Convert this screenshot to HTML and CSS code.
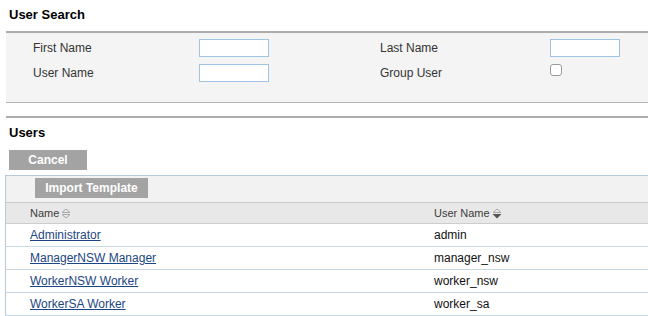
FILE: index.html
```html
<!DOCTYPE html>
<html lang="en">
<head>
  <meta charset="UTF-8">
  <title>User Search</title>
  <link rel="stylesheet" href="styles.css">
</head>
<body>
  <h2 class="page-title">User Search</h2>
  <div class="search-panel">
    <div class="search-grid">
      <label>First Name</label>
      <input type="text" class="field">
      <label>Last Name</label>
      <input type="text" class="field">
      <label>User Name</label>
      <input type="text" class="field">
      <label>Group User</label>
      <input type="checkbox" class="check">
    </div>
  </div>

  <div class="users-head">
    <h2 class="page-title users-title">Users</h2>
    <button class="btn btn-cancel">Cancel</button>
  </div>

  <div class="grid-box">
    <div class="toolbar">
      <button class="btn btn-import">Import Template</button>
    </div>
    <table class="user-table">
      <thead>
        <tr>
          <th class="col-name">Name<svg class="sort" width="10" height="11" viewBox="0 0 10 11"><polygon points="1,4.5 5,1 9,4.5" fill="none" stroke="#a8a8a8"/><polygon points="1,6.5 9,6.5 5,10" fill="none" stroke="#a8a8a8"/></svg></th>
          <th>User Name<svg class="sort" width="10" height="11" viewBox="0 0 10 11"><polygon points="1,4.5 5,1 9,4.5" fill="none" stroke="#a8a8a8"/><polygon points="0.5,6 9.5,6 5,10.5" fill="#555"/></svg></th>
        </tr>
      </thead>
      <tbody>
        <tr><td><a href="#">Administrator</a></td><td>admin</td></tr>
        <tr><td><a href="#">ManagerNSW Manager</a></td><td>manager_nsw</td></tr>
        <tr><td><a href="#">WorkerNSW Worker</a></td><td>worker_nsw</td></tr>
        <tr><td><a href="#">WorkerSA Worker</a></td><td>worker_sa</td></tr>
      </tbody>
    </table>
  </div>
</body>
</html>
```

FILE: styles.css
```css
body {
  margin: 0;
  font-family: "Liberation Sans", Arial, sans-serif;
  font-size: 12px;
  color: #333;
  background: #fff;
}

.page-title {
  margin: 0;
  padding: 7px 9px 9px;
  font-size: 13px;
  line-height: 15px;
  font-weight: bold;
  color: #000;
}

/* search form */
.search-panel {
  margin-left: 6px;
  border-top: 2px solid #acacac;
  border-bottom: 1px solid #b4b4b4;
  background-color: #f4f4f4;
  padding: 6px 0 20px 27px;
}

.search-grid {
  display: grid;
  grid-template-columns: 166px 181px 170px auto;
  grid-auto-rows: 18px;
  row-gap: 7px;
  align-items: center;
}

.search-grid label {
  color: #333;
}

.field {
  box-sizing: border-box;
  width: 70px;
  height: 18px;
  margin: 0;
  border: 1px solid #9dc4e6;
  background: #fff;
}

.check {
  appearance: none;
  -webkit-appearance: none;
  align-self: start;
  box-sizing: border-box;
  width: 12px;
  height: 12px;
  margin: 0;
  border: 1px solid #9a9a9a;
  border-radius: 3px;
  background: #fff;
}

/* users section */
.users-head {
  margin-top: 13px;
  margin-left: 6px;
  border-top: 2px solid #acacac;
}

.users-title {
  padding: 7px 3px 10px;
}

.btn {
  height: 20px;
  padding: 0;
  border: none;
  background-color: #a3a3a3;
  color: #fff;
  font-family: "Liberation Sans", Arial, sans-serif;
  font-size: 12px;
  font-weight: bold;
  cursor: pointer;
}

.btn-cancel {
  display: block;
  width: 78px;
  margin-left: 3px;
}

.btn-import {
  width: 113px;
}

.grid-box {
  margin-top: 5px;
  margin-left: 5px;
  border-top: 1px solid #b7c8d7;
  border-left: 1px solid #b7c8d7;
}

.toolbar {
  height: 24px;
  padding: 2px 0 0 29px;
  background-color: #f2f2f2;
  border-bottom: 1px solid #cacaca;
}

.user-table {
  width: 100%;
  border-collapse: collapse;
}

.user-table th {
  height: 20px;
  padding: 0 0 0 24px;
  text-align: left;
  font-size: 11px;
  font-weight: normal;
  color: #3c3c3c;
  background-color: #e8e8e8;
  border-bottom: 1px solid #cdcdcd;
}

.user-table .col-name {
  width: 380px;
}

.sort {
  margin-left: 2px;
  vertical-align: -2px;
}

.user-table td {
  height: 22px;
  padding: 0 0 0 24px;
  border-bottom: 1px solid #c9d7e3;
  color: #111;
}

.user-table a {
  color: #1c4584;
  text-decoration: underline;
}
```
